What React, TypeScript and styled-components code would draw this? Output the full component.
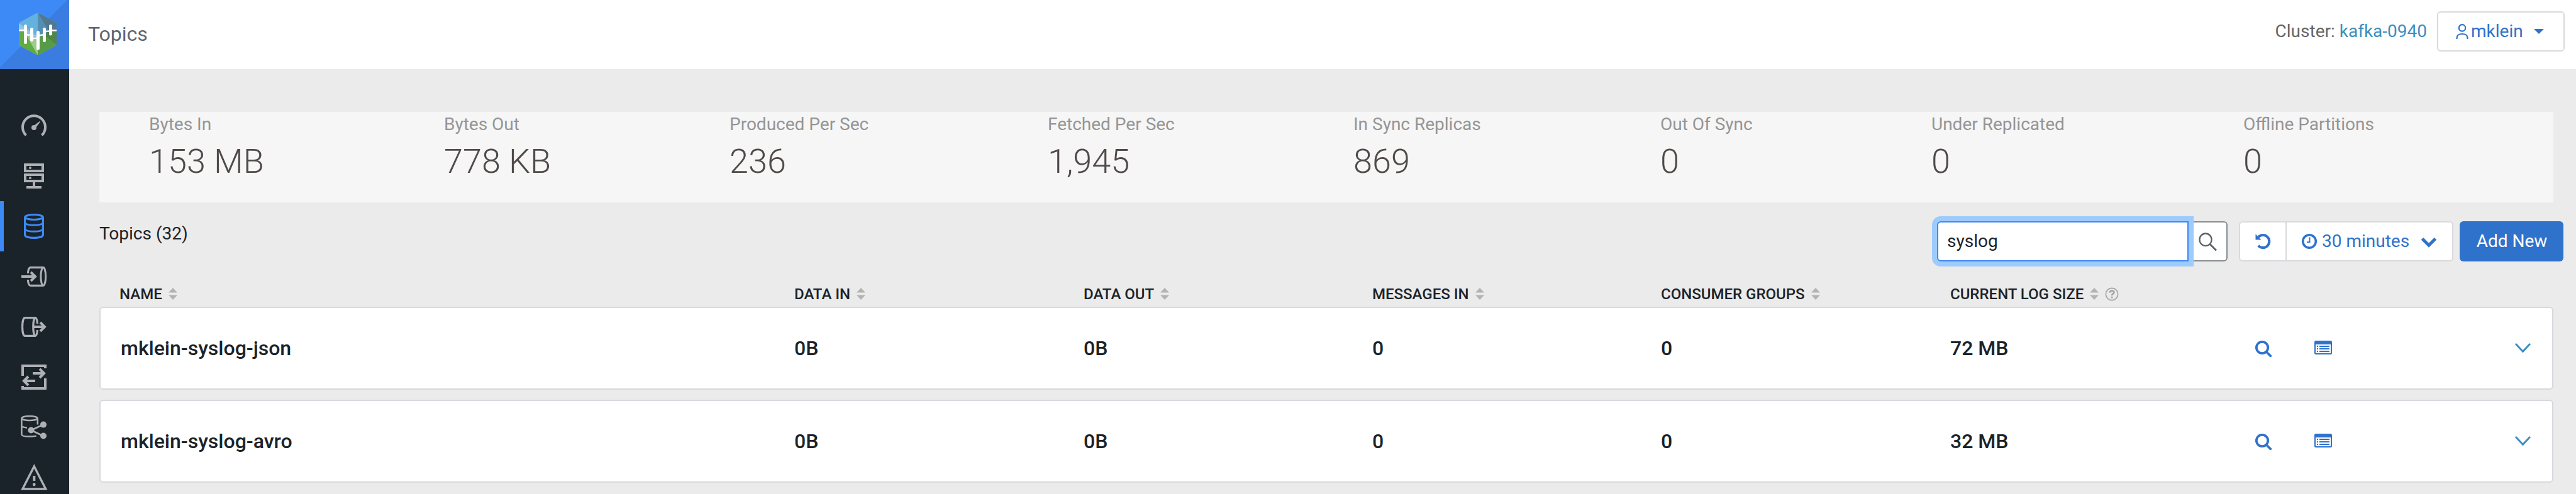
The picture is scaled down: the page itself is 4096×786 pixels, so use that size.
import React from "react";
import styled, { createGlobalStyle } from "styled-components";

const GlobalStyle = createGlobalStyle`
  * { box-sizing: border-box; }
  body {
    margin: 0;
    background: #ebebeb;
    font-family: Roboto, "Liberation Sans", sans-serif;
    font-size: 28px;
    color: #1b2329;
  }
  svg { display: block; flex: none; }
`;

const Page = styled.div`
  display: flex;
  width: 4096px;
  height: 786px;
  overflow: hidden;
`;

const Sidebar = styled.nav`
  width: 110px;
  flex: none;
  background: #192329;
`;

const LogoTile = styled.div`
  height: 110px;
  background: linear-gradient(135deg, #3d8af7 48.6%, #3a7cdf 48.7%);
  margin-bottom: 50px;
  display: flex;
  padding: 20px 0 0 30px;
`;

const NavItem = styled.a<{ $active?: boolean }>`
  display: flex;
  align-items: center;
  height: 80px;
  padding-left: 26px;
  border-left: 6px solid ${(p) => (p.$active ? "#3d8af7" : "transparent")};
  color: ${(p) => (p.$active ? "#3d8af7" : "#aeb0b6")};
`;

const Main = styled.main`
  flex: 1;
  min-width: 0;
`;

const TopBar = styled.header`
  display: flex;
  height: 110px;
  background: #fff;
  padding: 18px 18px 0 30px;
`;

const Title = styled.h1`
  flex: 1;
  margin: 0;
  font-size: 32px;
  font-weight: 400;
  line-height: 72px;
  color: #5e6670;
`;

const Cluster = styled.div`
  line-height: 63px;
  color: #666;
  margin-right: 16px;
  a { color: #3c8fc0; }
`;

const UserButton = styled.button`
  display: flex;
  align-items: center;
  width: 203px;
  height: 64px;
  padding: 0 0 0 28px;
  border: 2px solid #d9d9de;
  border-radius: 6px;
  background: #fff;
  color: #2f72cb;
  font: inherit;
  span { margin: 0 17px 0 4px; padding-bottom: 1px; }
`;

const Content = styled.div`
  padding: 68px 36px 0 48px;
`;

const Stats = styled.section`
  display: grid;
  grid-template-columns: 469px 454px 506px 486px 488px 431px 496px 1fr;
  height: 144px;
  padding-left: 79px;
  background: #f6f6f6;
`;

const Stat = styled.div``;

const StatLabel = styled.div`
  line-height: 39px;
  color: #959595;
`;

const StatValue = styled.div`
  font-size: 54px;
  font-weight: 300;
  line-height: 79px;
  color: #504a49;
`;

const Toolbar = styled.div`
  display: flex;
  height: 124px;
  padding-top: 30px;
  margin-right: -16px;
`;

const Count = styled.div`
  flex: 1;
  line-height: 39px;
`;

const SearchInput = styled.input`
  width: 400px;
  height: 64px;
  padding: 0 14px 1px;
  border: 2px solid #3d87f5;
  border-radius: 6px 0 0 6px;
  background: #fff;
  color: #1b2329;
  font: inherit;
  outline: none;
  box-shadow: 0 0 0 8px #9dcbfc;
  position: relative;
`;

const SearchButton = styled.button`
  width: 62px;
  height: 64px;
  margin-right: 18px;
  padding: 1px 0 0 16px;
  border: 2px solid #868c91;
  border-left: 0;
  border-radius: 0 6px 6px 0;
  background: #fff;
  color: #5b6168;
`;

const RangeGroup = styled.div`
  display: flex;
  width: 341px;
  height: 64px;
  margin-right: 10px;
  border: 2px solid #d9d9de;
  border-radius: 6px;
  background: #fff;
  color: #2f72cb;
`;

const RefreshPart = styled.div`
  display: flex;
  align-items: center;
  width: 74px;
  padding-left: 24px;
  border-right: 2px solid #d9d9de;
`;

const RangePart = styled.div`
  display: flex;
  align-items: center;
  padding-left: 23px;
  span { margin: 0 18px 0 7px; padding-bottom: 1px; }
`;

const AddButton = styled.button`
  width: 165px;
  height: 64px;
  border: 0;
  border-radius: 6px;
  background: #2f72cb;
  color: #fff;
  font: inherit;
  padding: 0 0 1px 1px;
`;

const columns = "460px 459px 459px 460px 485px 94px 319px 1fr";

const HeadRow = styled.div`
  display: grid;
  grid-template-columns: 1073px ${columns};
  height: 42px;
  padding: 2px 0 0 32px;
  font-size: 24px;
  font-weight: 500;
  line-height: 40px;
`;

const HeadCell = styled.div`
  display: flex;
  align-items: center;
  white-space: nowrap;
  svg { margin-left: 10px; }
`;

const Row = styled.div`
  display: grid;
  grid-template-columns: 1071px ${columns};
  align-items: center;
  height: 132px;
  margin-bottom: 16px;
  padding-left: 32px;
  border: 2px solid #d8d8de;
  border-radius: 6px;
  background: #fff;
  font-size: 32px;
  font-weight: 500;
  color: #1b2329;
`;

const RowIcon = styled.span<{ $tone?: string }>`
  color: ${(p) => p.$tone || "#2f72cb"};
`;

const Logo = () => (
  <svg width="60" height="68" viewBox="0 0 60 68">
    <defs>
      <clipPath id="hex">
        <path d="M26.500 1.800Q30 0.200 33.500 1.800L57 14.500Q60 16.200 60 19.500V48.500Q60 51.800 57 53.500L33.500 66.200Q30 68 26.500 66.200L3 53.500Q0 51.800 0 48.500V19.500Q0 16.200 3 14.500Z" />
      </clipPath>
    </defs>
    <g clipPath="url(#hex)">
      <rect width="60" height="68" fill="#62b1df" />
      <path d="M0 17L30 38V68L0 50Z" fill="#93c4e8" />
      <path d="M30 0L50 34H30Z" fill="#568eb3" />
      <path d="M30 0H60V34H50Z" fill="#50788f" />
      <path d="M0 29.500H10L12 36H20L22 41H30V68H0Z" fill="#60ab42" />
      <path d="M12.500 37L20 36L22 41H30V68Z" fill="#9ccb8a" />
      <path d="M30 41L36 36H40L46 30H60V68H30Z" fill="#579b47" />
      <path d="M60 30V51L42 37L46 30Z" fill="#50864a" />
      <path d="M0 28.300H10M11 34.500Q15 37 20 34.500M21 40.300Q25 42 30 40M31 36Q35 37 40 34.500M41 29Q45 31 50 28.500H60" stroke="#fff" strokeWidth="2.400" fill="none" />
    </g>
    <path d="M10.500 21.500V47.500M20.500 26.500V43.500M30.500 31.500V57M40.500 26.500V44.500M50.500 21.500V34" stroke="#fff" strokeWidth="5" strokeLinecap="round" />
  </svg>
);

const Icon = ({ children }: { children: React.ReactNode }) => (
  <svg width="44" height="44" viewBox="-2 -2 44 44" fill="none" stroke="currentColor" strokeWidth="4">
    {children}
  </svg>
);

const navIcons = [
  <Icon key="gauge">
    <path d="M7.500 35.200A18 18 0 1 1 32.500 35.200" />
    <circle cx="20" cy="23" r="4" fill="currentColor" stroke="none" />
    <path d="M18 21.500L28.900 13L29.900 14L21.700 24.700Z" fill="currentColor" stroke="none" />
  </Icon>,
  <Icon key="brokers">
    <path d="M6 2H34V12H6ZM6 18H34V28H6Z" />
    <path d="M20 29V37M8 38H32" />
    <circle cx="14" cy="7" r="2" fill="currentColor" stroke="none" />
    <circle cx="14" cy="23" r="2" fill="currentColor" stroke="none" />
  </Icon>,
  <Icon key="topics">
    <ellipse cx="20" cy="5.500" rx="14.300" ry="4" strokeWidth="3.200" />
    <path d="M5.600 6V33.500C5.600 36.500 11 38.400 20 38.400S34.400 36.500 34.400 33.500V6" strokeWidth="3.200" />
    <path d="M5.600 15C8 17.500 14 18.300 20 18.300S32 17.500 34.400 15M5.600 25C8 27.500 14 28.300 20 28.300S32 27.500 34.400 25" strokeWidth="3" />
  </Icon>,
  <Icon key="producers">
    <path d="M10.400 15C10.800 8.500 12.500 5.600 14.500 5.600H35M10.400 25C10.800 31.500 12.500 34.400 14.500 34.400H35" strokeWidth="3.200" />
    <ellipse cx="34.800" cy="20" rx="3.900" ry="14.400" strokeWidth="3" />
    <path d="M0 20H22" />
    <path d="M15 13L22 20L15 27" />
  </Icon>,
  <Icon key="consumers">
    <path d="M22.500 5.600H5.500C3.500 5.600 1.600 11 1.600 20S3.500 34.400 5.500 34.400H22.500" strokeWidth="3.200" />
    <path d="M25.500 15C25 8.500 23.800 5.600 22.300 5.600C20.500 5.600 18.800 11 18.800 20S20.500 34.400 22.300 34.400C23.800 34.400 25 31.500 25.500 25" strokeWidth="3.200" />
    <path d="M19 20H36" />
    <path d="M30 13L37 20L30 27" />
  </Icon>,
  <Icon key="replication">
    <path d="M2 18V2H38V6M38 22V38H2V34" />
    <path d="M18 14H36M22 26H4" />
    <path d="M29 7L36 14L29 21M11 19L4 26L11 33" />
  </Icon>,
  <Icon key="schema">
    <ellipse cx="13" cy="5.500" rx="12.500" ry="3.600" strokeWidth="2.500" />
    <path d="M0.400 5.500V31.500C0.600 33.600 6 34.600 13 34.600Q19 34.600 23.500 33.600M25.800 5.500V15.500M0.400 18.500Q4 20.300 9 20.500" strokeWidth="2.500" />
    <path d="M15.500 24.500L34.500 15.700M15.500 24.500L34.500 33.500" strokeWidth="2.600" />
    <g fill="currentColor" stroke="none">
      <circle cx="15.400" cy="24.500" r="5" />
      <circle cx="35" cy="15.600" r="5" />
      <circle cx="35" cy="33.500" r="5" />
    </g>
  </Icon>,
  <Icon key="alerts">
    <path d="M20.300 2L38.700 38H1.900Z" strokeWidth="3.400" />
    <path d="M20.300 17V25" />
    <circle cx="20.300" cy="31" r="2.400" fill="currentColor" stroke="none" />
  </Icon>,
];

const SortIcon = () => (
  <svg width="14" height="20" viewBox="0 0 14 20" fill="#b3b3b3">
    <path d="M7 0L14 7.500H0ZM7 19L14 11.500H0Z" />
  </svg>
);

const HelpIcon = () => (
  <svg width="22" height="22" viewBox="0 0 22 22" fill="none" stroke="#a3a5a8">
    <circle cx="11" cy="11" r="9.600" strokeWidth="1.700" />
    <path d="M7.600 8.600C7.800 6.600 9 5.700 11 5.700C13 5.700 14.400 6.700 14.400 8.300C14.400 10.500 11 10.300 11 13.200" strokeWidth="2.600" />
    <path d="M11 14.800V17.400" strokeWidth="3" />
  </svg>
);

const SearchIcon = () => (
  <svg width="30" height="30" viewBox="0 0 30 30" fill="none" stroke="currentColor">
    <ellipse cx="11" cy="11.300" rx="9.600" ry="9.800" strokeWidth="2.300" />
    <path d="M17.700 18.300L28 28.500" strokeWidth="2.800" />
  </svg>
);

const ProfileIcon = () => (
  <svg width="28" height="28" viewBox="0 0 28 28" fill="none" stroke="currentColor">
    <circle cx="11" cy="13" r="9.200" strokeWidth="3.800" />
    <path d="M17.800 20L24.300 26.300" strokeWidth="3.700" strokeLinecap="round" />
  </svg>
);

const ListIcon = () => (
  <svg width="28" height="24" viewBox="0 0 28 24" fill="currentColor">
    <path fillRule="evenodd" d="M2.500 0H25.500Q28 0 28 2.500V19.500Q28 22 25.500 22H2.500Q0 22 0 19.500V2.500Q0 0 2.500 0ZM2 6V20H26V6Z" />
    <path d="M4 8H6V10H4ZM8 8H24V10H8ZM4 12H6V14H4ZM8 12H24V14H8ZM4 16H6V18H4ZM8 16H24V18H8Z" />
  </svg>
);

const ExpandIcon = () => (
  <svg width="26" height="18" viewBox="0 0 26 18" fill="none" stroke="currentColor" strokeWidth="3" strokeLinecap="round">
    <path d="M1.800 2.800L12.500 14.200L23.200 2.800" />
  </svg>
);

const RefreshIcon = () => (
  <svg width="26" height="26" viewBox="0 0 26 26" fill="none" stroke="currentColor">
    <path d="M4.800 6.500A10 10 0 1 1 4.800 19.700" strokeWidth="4" />
    <path d="M0.500 1.500L9.500 10.500H0.500Z" fill="currentColor" stroke="none" />
  </svg>
);

const ClockIcon = () => (
  <svg width="26" height="26" viewBox="0 0 26 26" fill="none" stroke="currentColor">
    <circle cx="13" cy="13" r="10.300" strokeWidth="3.500" />
    <path d="M13.500 6.500V14.300H9" strokeWidth="1.900" />
  </svg>
);

const UserIcon = () => (
  <svg width="20" height="26" viewBox="0 0 20 26" fill="none" stroke="currentColor" strokeWidth="2.200">
    <circle cx="10" cy="7.400" r="5.200" />
    <path d="M1.500 25V23.500Q1.500 17 10 17T18.500 23.500V25" />
  </svg>
);

const stats = [
  ["Bytes In", "153 MB"],
  ["Bytes Out", "778 KB"],
  ["Produced Per Sec", "236"],
  ["Fetched Per Sec", "1,945"],
  ["In Sync Replicas", "869"],
  ["Out Of Sync", "0"],
  ["Under Replicated", "0"],
  ["Offline Partitions", "0"],
];

const heads = ["NAME", "DATA IN", "DATA OUT", "MESSAGES IN", "CONSUMER GROUPS", "CURRENT LOG SIZE"];

const topics = [
  ["mklein-syslog-json", "0B", "0B", "0", "0", "72 MB"],
  ["mklein-syslog-avro", "0B", "0B", "0", "0", "32 MB"],
];

export default function App() {
  return (
    <Page>
      <GlobalStyle />
      <Sidebar>
        <LogoTile>
          <Logo />
        </LogoTile>
        {navIcons.map((icon, i) => (
          <NavItem key={i} $active={i === 2}>
            {icon}
          </NavItem>
        ))}
      </Sidebar>
      <Main>
        <TopBar>
          <Title>Topics</Title>
          <Cluster>
            Cluster: <a>kafka-0940</a>
          </Cluster>
          <UserButton>
            <UserIcon />
            <span>mklein</span>
            <svg width="16" height="8" viewBox="0 0 16 8" fill="currentColor">
              <path d="M0 0H16L8 8Z" />
            </svg>
          </UserButton>
        </TopBar>
        <Content>
          <Stats>
            {stats.map(([label, value]) => (
              <Stat key={label}>
                <StatLabel>{label}</StatLabel>
                <StatValue>{value}</StatValue>
              </Stat>
            ))}
          </Stats>
          <Toolbar>
            <Count>Topics (32)</Count>
            <SearchInput defaultValue="syslog" />
            <SearchButton>
              <SearchIcon />
            </SearchButton>
            <RangeGroup>
              <RefreshPart>
                <RefreshIcon />
              </RefreshPart>
              <RangePart>
                <ClockIcon />
                <span>30 minutes</span>
                <svg width="26" height="22" viewBox="0 0 26 22" fill="none" stroke="currentColor" strokeWidth="5">
                  <path d="M2.500 6.800L13 17.300L23.500 6.800" />
                </svg>
              </RangePart>
            </RangeGroup>
            <AddButton>Add New</AddButton>
          </Toolbar>
          <HeadRow>
            {heads.map((h, i) => (
              <HeadCell key={h}>
                {h}
                <SortIcon />
                {i === 5 && <HelpIcon />}
              </HeadCell>
            ))}
          </HeadRow>
          {topics.map((cells) => (
            <Row key={cells[0]}>
              {cells.map((c, i) => (
                <span key={i}>{c}</span>
              ))}
              <RowIcon>
                <ProfileIcon />
              </RowIcon>
              <RowIcon>
                <ListIcon />
              </RowIcon>
              <RowIcon $tone="#3c8fc0">
                <ExpandIcon />
              </RowIcon>
            </Row>
          ))}
        </Content>
      </Main>
    </Page>
  );
}
